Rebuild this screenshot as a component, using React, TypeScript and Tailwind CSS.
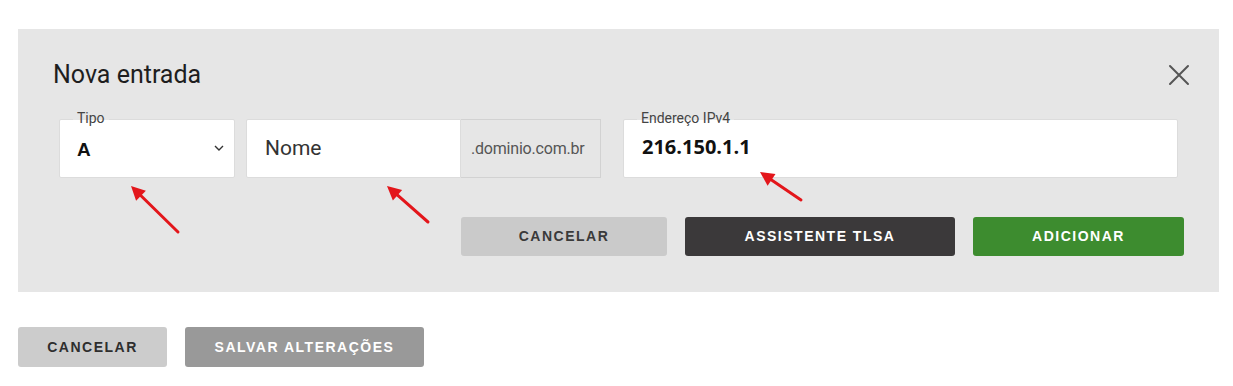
import React from "react";

const sans = "font-['Roboto','Liberation_Sans',sans-serif]";
const arial = "font-['Liberation_Sans',Arial,sans-serif]";

const Arrow: React.FC<{ x1: number; y1: number; x2: number; y2: number }> = ({ x1, y1, x2, y2 }) => {
  const ang = Math.atan2(y2 - y1, x2 - x1);
  const len = 14;
  const w = 7;
  const bx = x2 - Math.cos(ang) * len;
  const by = y2 - Math.sin(ang) * len;
  const px = -Math.sin(ang) * w;
  const py = Math.cos(ang) * w;
  return (
    <g>
      <line x1={x1} y1={y1} x2={bx} y2={by} stroke="#e3161b" strokeWidth={3} strokeLinecap="round" />
      <polygon points={`${x2},${y2} ${bx + px},${by + py} ${bx - px},${by - py}`} fill="#e3161b" />
    </g>
  );
};

const Label: React.FC<{ text: string }> = ({ text }) => (
  <span
    className={`absolute left-[13px] -top-[10px] px-[4px] text-[14px] leading-[16px] text-[#444] bg-[linear-gradient(to_bottom,#e6e6e6_62%,transparent_62%)] ${sans}`}
  >
    {text}
  </span>
);

const App: React.FC = () => (
  <div className="relative w-[1233px] h-[386px] bg-white overflow-hidden">
    <div className="pt-[29px] pl-[18px]">
      <div className="w-[1201px] h-[263px] bg-[#e6e6e6] pt-[31px]">
        <div className="flex items-center justify-between pl-[35px] pr-[29px] h-[30px]">
          <h2 className={`text-[25px] leading-[30px] text-[#1e1e1e] ${sans}`}>Nova entrada</h2>
          <svg width="22" height="22" viewBox="0 0 22 22">
            <path d="M2 2 L20 20 M20 2 L2 20" stroke="#555" strokeWidth="2" strokeLinecap="round" />
          </svg>
        </div>
        <div className="flex mt-[29px] pl-[41px] h-[59px]">
          <div className="relative w-[176px] bg-white rounded-[2px] border border-[#dcdcdc] flex items-center justify-between pl-[17px] pr-[10px]">
            <Label text="Tipo" />
            <span className={`text-[19px] font-bold text-[#111] mt-[4px] ${arial}`}>A</span>
            <svg width="10" height="6" viewBox="0 0 10 6" className="mt-[-2px]">
              <path d="M1 1 L5 5 L9 1" fill="none" stroke="#333" strokeWidth="1.4" />
            </svg>
          </div>
          <div className="flex ml-[11px] w-[355px]">
            <div className="w-[215px] bg-white rounded-l-[2px] border border-[#dcdcdc] flex items-center pl-[18px]">
              <span className={`text-[21px] text-[#333] ${sans}`}>Nome</span>
            </div>
            <div className="w-[140px] border border-l-0 border-[#d2d2d2] flex items-center pl-[10px]">
              <span className={`text-[16px] tracking-[-0.2px] text-[#555] ${sans}`}>.dominio.com.br</span>
            </div>
          </div>
          <div className="relative ml-[22px] w-[555px] bg-white rounded-[2px] border border-[#dcdcdc] flex items-center pl-[18px]">
            <Label text="Endereço IPv4" />
            <span className={`text-[20px] font-bold text-[#111] mb-[4px] font-['Open_Sans',sans-serif]`}>216.150.1.1</span>
          </div>
        </div>
        <div className={`flex mt-[39px] pl-[443px] gap-[18px] h-[39px] text-[14px] font-bold tracking-[1.5px] ${arial}`}>
          <button className="w-[206px] rounded-[3px] bg-[#cacaca] text-[#3a3a3a]">CANCELAR</button>
          <button className="w-[270px] rounded-[3px] bg-[#3b393a] text-white">ASSISTENTE TLSA</button>
          <button className="w-[211px] rounded-[3px] bg-[#3d8c2f] text-white">ADICIONAR</button>
        </div>
      </div>
      <div className={`flex mt-[35px] gap-[18px] h-[40px] text-[14px] font-bold tracking-[1.5px] ${arial}`}>
        <button className="w-[149px] rounded-[3px] bg-[#cccccc] text-[#2e2e2e]">CANCELAR</button>
        <button className="w-[239px] rounded-[3px] bg-[#999999] text-white">SALVAR ALTERAÇÕES</button>
      </div>
    </div>
    <svg className="absolute inset-0 pointer-events-none" width="1233" height="386">
      <Arrow x1={178} y1={232} x2={131} y2={186} />
      <Arrow x1={428} y1={222} x2={387} y2={186} />
      <Arrow x1={801} y1={200} x2={760} y2={172} />
    </svg>
  </div>
);

export default App;
